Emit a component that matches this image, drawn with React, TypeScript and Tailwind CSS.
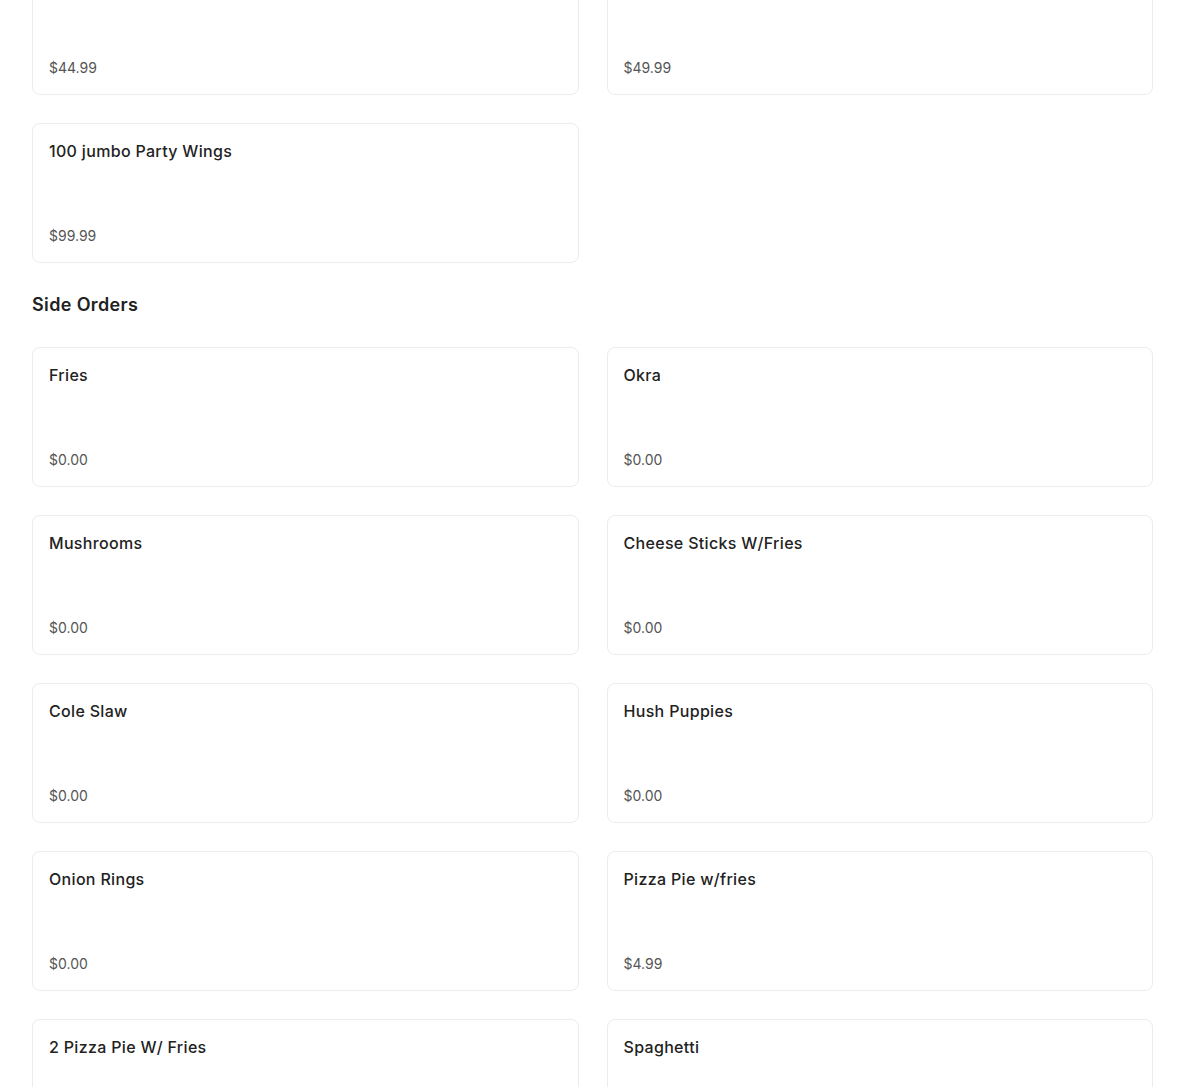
const topItems = [
  { name: "50 jumbo Party Wings", price: "$44.99" },
  { name: "75 jumbo Party Wings", price: "$49.99" },
  { name: "100 jumbo Party Wings", price: "$99.99" },
];

const sideOrders = [
  { name: "Fries", price: "$0.00" },
  { name: "Okra", price: "$0.00" },
  { name: "Mushrooms", price: "$0.00" },
  { name: "Cheese Sticks W/Fries", price: "$0.00" },
  { name: "Cole Slaw", price: "$0.00" },
  { name: "Hush Puppies", price: "$0.00" },
  { name: "Onion Rings", price: "$0.00" },
  { name: "Pizza Pie w/fries", price: "$4.99" },
  { name: "2 Pizza Pie W/ Fries", price: "$0.00" },
  { name: "Spaghetti", price: "$0.00" },
];

type Item = { name: string; price: string };

const MenuCard = ({ item }: { item: Item }) => (
  <div className="flex h-[140px] flex-col justify-between rounded-lg border border-[#ececec] bg-white px-4 pt-[15px] pb-4">
    <h3 className="text-base leading-6 font-medium tracking-[0.02em] text-[#222]">{item.name}</h3>
    <p className="text-sm leading-5 font-normal text-[#555]">{item.price}</p>
  </div>
);

export default function App() {
  return (
    <div
      className="min-h-screen bg-white px-8"
      style={{ fontFamily: 'Inter, "Open Sans", sans-serif' }}
    >
      <div className="-mt-[45px] pb-10">
        <div className="grid grid-cols-2 gap-7">
          {topItems.map(item => (
            <MenuCard key={item.name} item={item} />
          ))}
        </div>

        <h2 className="my-7 text-lg leading-7 font-semibold tracking-[0.02em] text-[#222]">Side Orders</h2>

        <div className="grid grid-cols-2 gap-7">
          {sideOrders.map(item => (
            <MenuCard key={item.name} item={item} />
          ))}
        </div>
      </div>
    </div>
  );
}
